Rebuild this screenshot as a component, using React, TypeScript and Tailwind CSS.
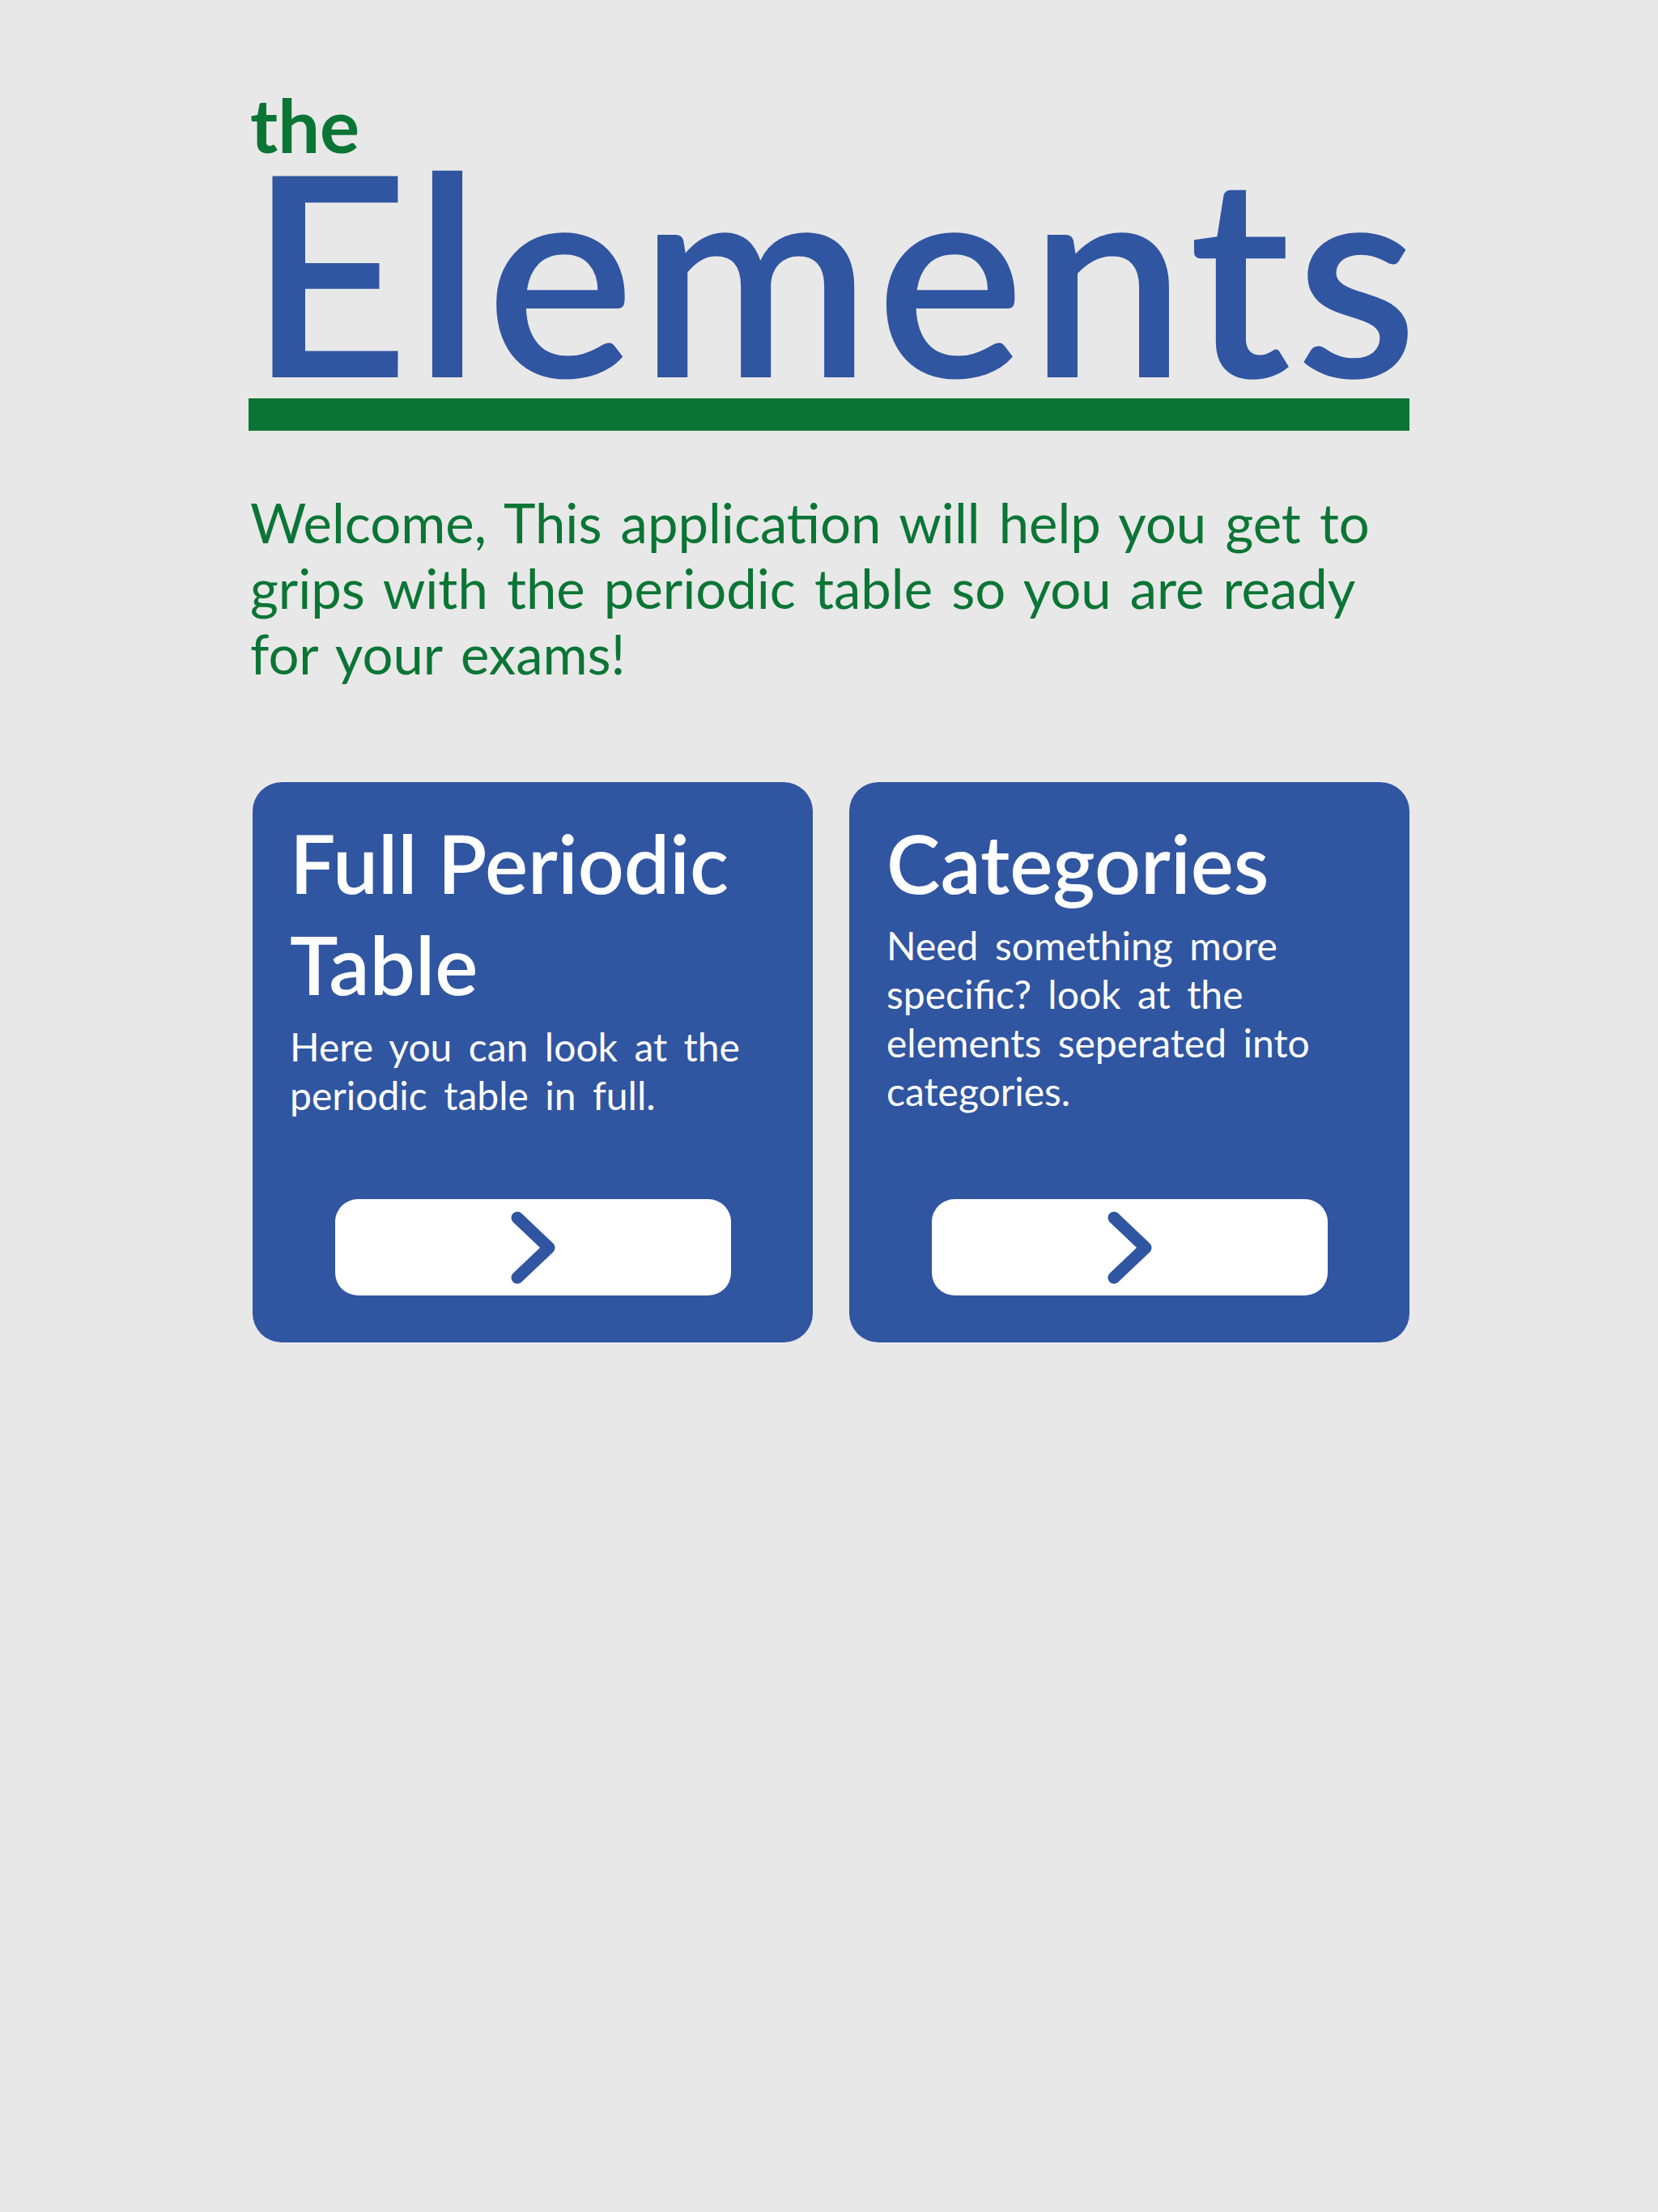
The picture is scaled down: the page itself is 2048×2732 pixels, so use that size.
import React from "react";

interface MenuCard {
  id: number;
  title: string;
  description: string;
}

const cards: MenuCard[] = [
  {
    id: 1,
    title: "Full Periodic Table",
    description: "Here you can look at the periodic table in full.",
  },
  {
    id: 2,
    title: "Categories",
    description:
      "Need something more specific? look at the elements seperated into categories.",
  },
];

function Chevron() {
  return (
    <svg width="57" height="92" viewBox="0 0 57 92" fill="none">
      <polyline
        points="9,9 48,46 9,83"
        stroke="#3055a1"
        strokeWidth="15"
        strokeLinecap="round"
        strokeLinejoin="round"
      />
    </svg>
  );
}

export default function App() {
  return (
    <div className="min-h-screen w-full bg-[#e8e8e8] font-['Lato','Noto_Sans',sans-serif]">
      <div className="mx-auto w-[1434px] pt-[108px] pb-24">
        {/* Logo */}
        <div className="text-[92px] leading-[92px] font-bold text-[#0b7535] pl-[2px]">
          the
        </div>
        <div className="mt-[12px] text-[345px] leading-[240px] font-semibold text-[#3055a1] tracking-[6px] whitespace-nowrap">
          Elements
        </div>
        <div className="mt-[40px] h-[40px] w-full bg-[#0b7535]" />

        {/* Intro */}
        <p className="mt-[73px] text-[67px] leading-[81px] text-[#0b7535] pl-[2px] [word-spacing:6px]">
          Welcome, This application will help you get to grips with the periodic table so you are
          ready for your exams!
        </p>

        {/* Menu cards */}
        <div className="mt-[118px] grid grid-cols-2 gap-[45px] pl-[5px]">
          {cards.map((card) => (
            <div
              key={card.id}
              className="flex h-[692px] flex-col rounded-[36px] bg-[#3055a1] px-[46px] pt-[37px] pb-[58px] text-white"
            >
              <h2 className="text-[100px] leading-[125px] font-semibold">{card.title}</h2>
              <p className="mt-[10px] text-[48px] leading-[60px] [word-spacing:0.17em]">
                {card.description}
              </p>
              <button className="mx-auto mt-auto flex h-[119px] w-[489px] items-center justify-center rounded-[28px] bg-white">
                <Chevron />
              </button>
            </div>
          ))}
        </div>
      </div>
    </div>
  );
}
